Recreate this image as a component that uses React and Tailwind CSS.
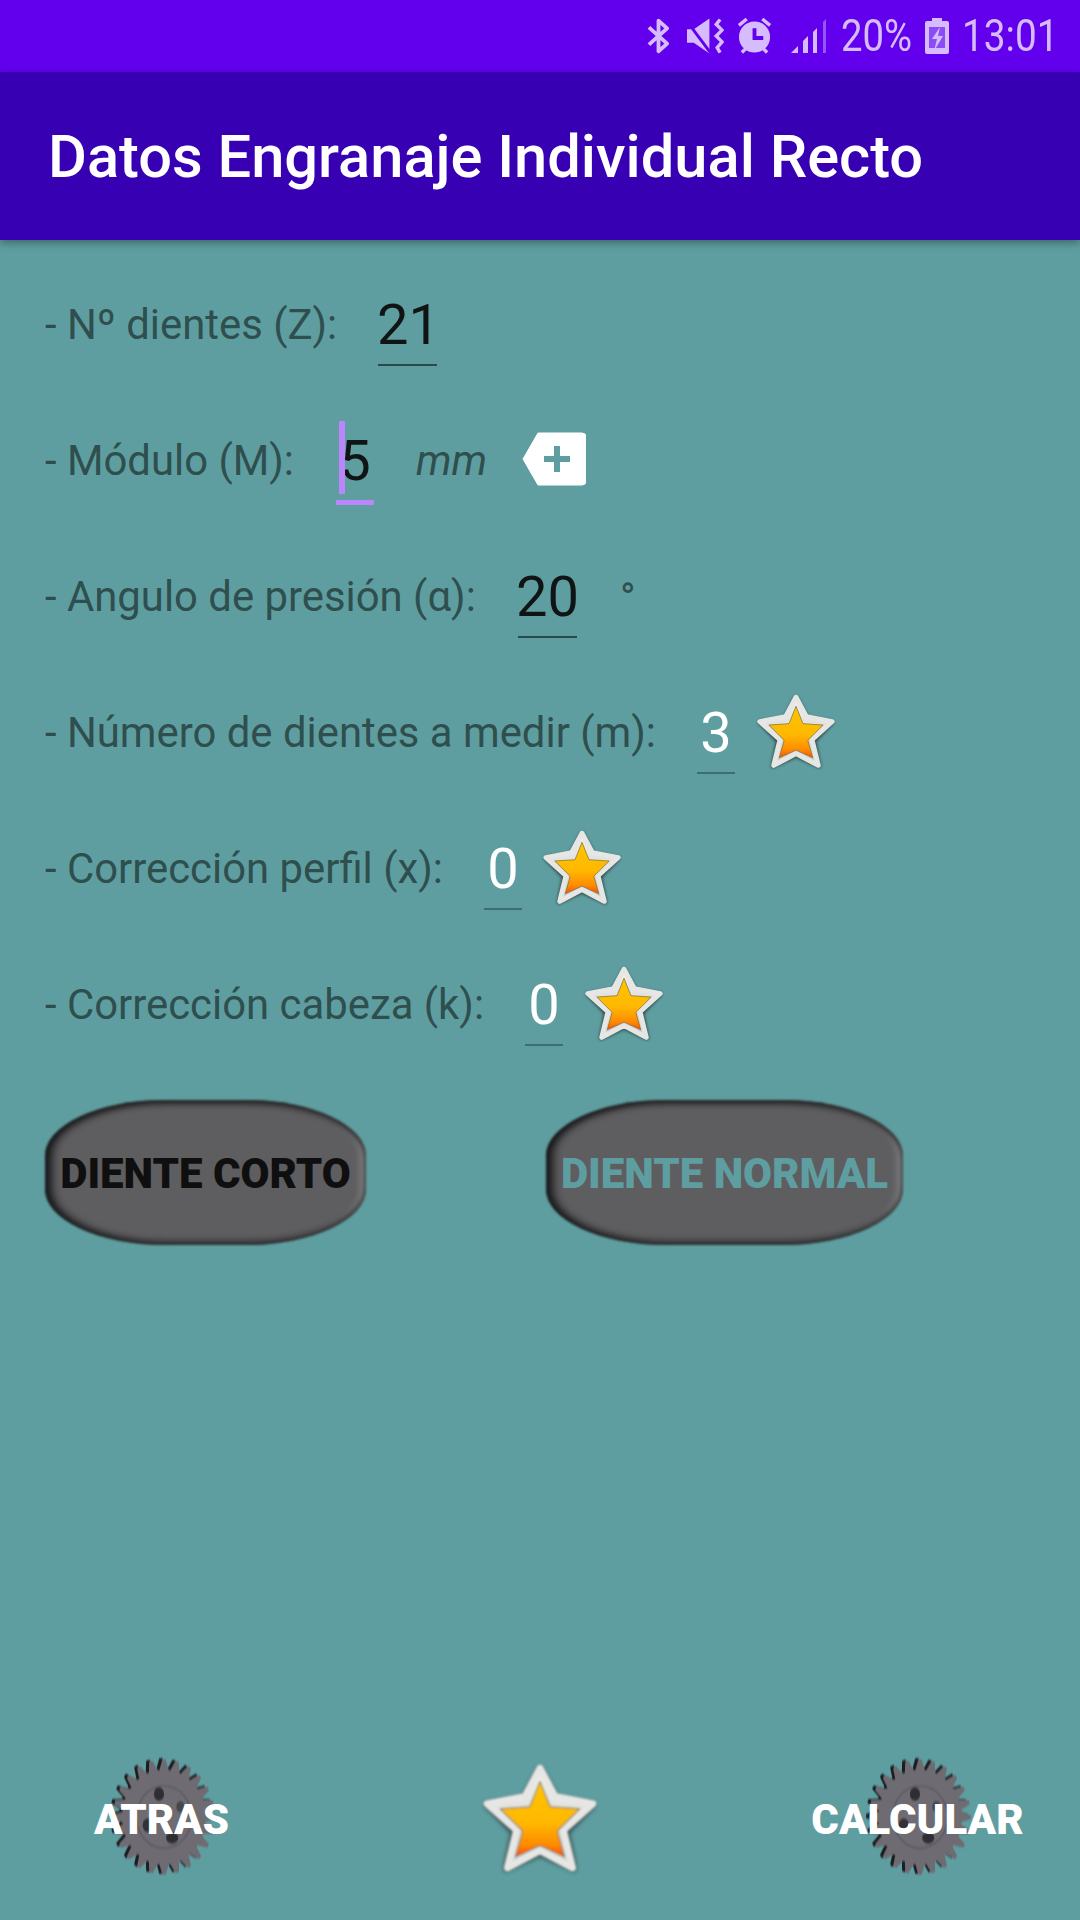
import { useId } from 'react';

const gearPath = () => {
  const teeth = 24;
  const pts = [];
  for (let i = 0; i < teeth; i++) {
    const a = (i / teeth) * Math.PI * 2;
    const step = (Math.PI * 2) / teeth;
    [[a - step * 0.42, 41], [a - step * 0.13, 50], [a + step * 0.13, 50], [a + step * 0.42, 41]].forEach(([t, r]) => {
      pts.push(`${(50 + r * Math.cos(t)).toFixed(2)} ${(50 + r * Math.sin(t)).toFixed(2)}`);
    });
  }
  return `M${pts.join('L')}Z`;
};

function Gear({ className }) {
  const id = useId();
  return (
    <svg viewBox="-4 -2 106 104" preserveAspectRatio="none" className={className}>
      <defs>
        <filter id={`${id}b`} x="-10%" y="-10%" width="120%" height="120%">
          <feGaussianBlur stdDeviation="0.7" />
        </filter>
      </defs>
      <g filter={`url(#${id}b)`}>
        <path d={gearPath()} fill="#1d1d20" transform="translate(-1 0)" />
        <path d={gearPath()} fill="#6e6c72" transform="translate(2 1)" />
        <circle cx="52" cy="51" r="27" fill="none" stroke="#5c5a60" strokeWidth="1.5" />
        <ellipse cx="47" cy="31" rx="5" ry="6" fill="#2e2d31" />
        <ellipse cx="36" cy="58" rx="5" ry="6" fill="#333236" />
        <ellipse cx="60" cy="69" rx="6" ry="5" fill="#2e2d31" />
        <ellipse cx="68" cy="42" rx="4" ry="5" fill="#47464b" />
      </g>
    </svg>
  );
}

function Star({ className }) {
  const id = useId();
  return (
    <svg viewBox="0 0 116 112" className={className}>
      <defs>
        <linearGradient id={`${id}g`} x1="0" y1="0" x2="0" y2="1">
          <stop offset="0%" stopColor="#ffc400" />
          <stop offset="55%" stopColor="#ffb800" />
          <stop offset="85%" stopColor="#ff8a00" />
          <stop offset="100%" stopColor="#ff4a00" />
        </linearGradient>
        <linearGradient id={`${id}w`} x1="0" y1="0" x2="0" y2="1">
          <stop offset="0%" stopColor="#f2f2f0" />
          <stop offset="100%" stopColor="#c6c9c8" />
        </linearGradient>
        <filter id={`${id}s`} x="-20%" y="-20%" width="140%" height="140%">
          <feGaussianBlur stdDeviation="2" />
        </filter>
        <filter id={`${id}t`} x="-20%" y="-20%" width="140%" height="140%">
          <feGaussianBlur stdDeviation="0.8" />
        </filter>
      </defs>
      <path
        d="M58 7L74 36L110 42L84 69L91 105L58 90L25 105L32 69L6 42L42 36Z"
        fill="#2f3d3e"
        stroke="#2f3d3e"
        strokeWidth="6"
        strokeLinejoin="round"
        filter={`url(#${id}s)`}
        opacity="0.85"
      />
      <g filter={`url(#${id}t)`}>
        <path
          d="M58 6L73 34L110 41L81 67L90 104L58 87L26 104L35 67L6 41L43 34Z"
          fill={`url(#${id}w)`}
          stroke="#e6e7e5"
          strokeWidth="7"
          strokeLinejoin="round"
        />
        <path
          d="M58 19L68 44L97 46L75 68L82 93L58 82L34 93L41 68L19 46L48 44Z"
          fill={`url(#${id}g)`}
          stroke="#7a6a30"
          strokeWidth="1"
          strokeLinejoin="round"
        />
      </g>
    </svg>
  );
}

function StatusIcons() {
  return (
    <div className="flex items-center text-[#d6bcff]">
      <svg viewBox="0 0 24 38" className="w-[23px] h-[38px] mr-[17px]" fill="none" stroke="currentColor" strokeWidth="4" strokeLinejoin="round">
        <path d="M2 10L21 27L12 35V3L21 11L2 28" />
      </svg>
      <svg viewBox="0 0 38 36" className="w-[37px] h-[36px] mr-[13px]" fill="currentColor">
        <path d="M0 11H7L23 0V36L7 25H0Z" />
        <path d="M0 3L24 35" stroke="#6200ee" strokeWidth="3" />
        <path d="M34 1L30 6L36 12L30 18L36 24L31 30L34 35" fill="none" stroke="currentColor" strokeWidth="3.5" />
      </svg>
      <svg viewBox="0 0 36 38" className="w-[35px] h-[38px] mr-[19px]" fill="currentColor">
        <circle cx="18" cy="20" r="16" />
        <path d="M2 8L10 1.5M34 8L26 1.5M5 36L9.5 31.5M31 36L26.5 31.5" stroke="currentColor" strokeWidth="3.5" />
        <path d="M18 11V21H27" fill="none" stroke="#6200ee" strokeWidth="4" />
      </svg>
      <svg viewBox="0 0 36 36" className="w-[36px] h-[36px] mr-[14px]" fill="currentColor">
        <path d="M0 35L7 28V35Z" />
        <path d="M12 23L17 18V35H12Z" />
        <path d="M22 14L26 10V35H22Z" />
        <path d="M32 4L35 1V35H32Z" opacity="0.45" />
      </svg>
      <span className="w-[71px] mr-[13px] text-[44px] leading-none origin-left scale-x-[0.87] whitespace-nowrap">20%</span>
      <svg viewBox="0 0 24 36" className="w-[24px] h-[36px] mr-[13px]" fill="currentColor">
        <path d="M7 0H17V3H22Q24 3 24 5V34Q24 36 22 36H2Q0 36 0 34V5Q0 3 2 3H7Z" />
        <path d="M4 9H20V30H4Z" fill="#8a4df5" />
        <path d="M15 9L7 21H12L9 33L18 18H13Z" fill="currentColor" />
      </svg>
      <span className="w-[95px] text-[44px] leading-none origin-left scale-x-[0.88] whitespace-nowrap">13:01</span>
    </div>
  );
}

function Campo({ valor, className = '', lineaClass = 'border-[#2a4a4c]', textoClass = 'text-[#101414]' }) {
  return (
    <div className={`flex flex-col items-center h-[84px] pt-[8px] border-b-2 ${lineaClass} ${className}`}>
      <span className={`text-[56px] leading-[70px] ${textoClass}`}>{valor}</span>
    </div>
  );
}

function Fila({ children }) {
  return <div className="flex items-center h-[136px] pl-[45px] text-[41.85px] text-[#2f4f4f]">{children}</div>;
}

function Etiqueta({ children, className }) {
  return <span className={`pt-[2px] ${className}`}>{children}</span>;
}

function BotonPastilla({ children, className }) {
  return (
    <div className={`relative flex items-center justify-center h-[145px] text-[42px] font-black leading-none ${className}`}>
      <div className="absolute inset-0 blur-[1px] rounded-[120px/56px] bg-[#5e5d60] shadow-[inset_7px_0_8px_#18191a,inset_0_4px_5px_#2b2c2d,inset_0_-4px_5px_#3a3b3c,inset_-5px_0_6px_#8c8c8c]" />
      <span className="relative pt-[3px]">{children}</span>
    </div>
  );
}

export default function App() {
  return (
    <div className="relative w-[1080px] h-[1920px] flex flex-col overflow-hidden bg-[#5f9ea0] font-['Roboto',sans-serif]">
      <div className="flex items-center justify-end h-[72px] bg-[#6200ee] pr-[23px]">
        <StatusIcons />
      </div>
      <div className="flex items-center h-[168px] bg-[#3700b3] pl-[48px] pt-[4px] shadow-[0_3px_8px_rgba(0,0,0,0.35)] z-10">
        <h1 className="text-[59.6px] font-medium text-white leading-none">Datos Engranaje Individual Recto</h1>
      </div>

      <div className="flex flex-col pt-[16px]">
        <Fila>
          <Etiqueta className="w-[333px]">- Nº dientes (Z):</Etiqueta>
          <Campo valor="21" className="w-[59px] pl-[2px]" />
        </Fila>
        <Fila>
          <Etiqueta className="w-[291px]">- Módulo (M):</Etiqueta>
          <div className="relative w-[38px]">
            <div className="flex flex-col items-center h-[90px] pt-[11px] border-b-[5px] border-[#bb86fc]">
              <span className="text-[56px] leading-[70px] text-[#101414]">5</span>
            </div>
            <div className="absolute left-[3px] top-[6px] w-[6px] h-[73px] bg-[#bb86fc]" />
          </div>
          <Etiqueta className="ml-[42px] italic">mm</Etiqueta>
          <svg viewBox="0 0 64 54" className="ml-[35px] -mt-[2px] w-[64px] h-[54px]">
            <path d="M16 1H60Q64 1 64 5V49Q64 53 60 53H16L1 27Z" fill="#fff" stroke="#fff" strokeLinejoin="round" />
            <path d="M35 14V40M22 27H48" stroke="#5f9ea0" strokeWidth="6" />
          </svg>
        </Fila>
        <Fila>
          <Etiqueta className="w-[473px]">- Angulo de presión (α):</Etiqueta>
          <Campo valor="20" className="w-[59px]" />
          <span className="ml-[43px] mt-[6px]">°</span>
        </Fila>
        <Fila>
          <Etiqueta className="w-[652px]">- Número de dientes a medir (m):</Etiqueta>
          <Campo valor="3" className="w-[38px]" lineaClass="border-[#3f6e70]" textoClass="text-white" />
          <Star className="ml-[20px] w-[82px] h-[78px]" />
        </Fila>
        <Fila>
          <Etiqueta className="w-[439px]">- Corrección perfil (x):</Etiqueta>
          <Campo valor="0" className="w-[38px]" lineaClass="border-[#3f6e70]" textoClass="text-white" />
          <Star className="ml-[19px] w-[82px] h-[78px]" />
        </Fila>
        <Fila>
          <Etiqueta className="w-[480px]">- Corrección cabeza (k):</Etiqueta>
          <Campo valor="0" className="w-[38px]" lineaClass="border-[#3f6e70]" textoClass="text-white" />
          <Star className="ml-[20px] w-[82px] h-[78px]" />
        </Fila>
      </div>

      <div className="flex items-center pl-[45px] mt-[28px]">
        <BotonPastilla className="w-[321px] text-[#0f0f0f]">DIENTE CORTO</BotonPastilla>
        <BotonPastilla className="ml-[180px] w-[357px] text-[#5f9ea0]">DIENTE NORMAL</BotonPastilla>
      </div>

      <div className="mt-auto mb-[37px] h-[128px] flex items-center pl-[94px] text-[42px] font-black text-white">
        <div className="relative w-[135px] flex justify-center">
          <Gear className="absolute left-[13px] top-[-32px] w-[108px] h-[120px]" />
          <span className="relative">ATRAS</span>
        </div>
        <Star className="ml-[252px] w-[118px] h-[114px]" />
        <div className="ml-[212px] relative w-[213px] flex justify-center">
          <Gear className="absolute left-[52px] top-[-32px] w-[108px] h-[120px]" />
          <span className="relative">CALCULAR</span>
        </div>
      </div>
    </div>
  );
}
